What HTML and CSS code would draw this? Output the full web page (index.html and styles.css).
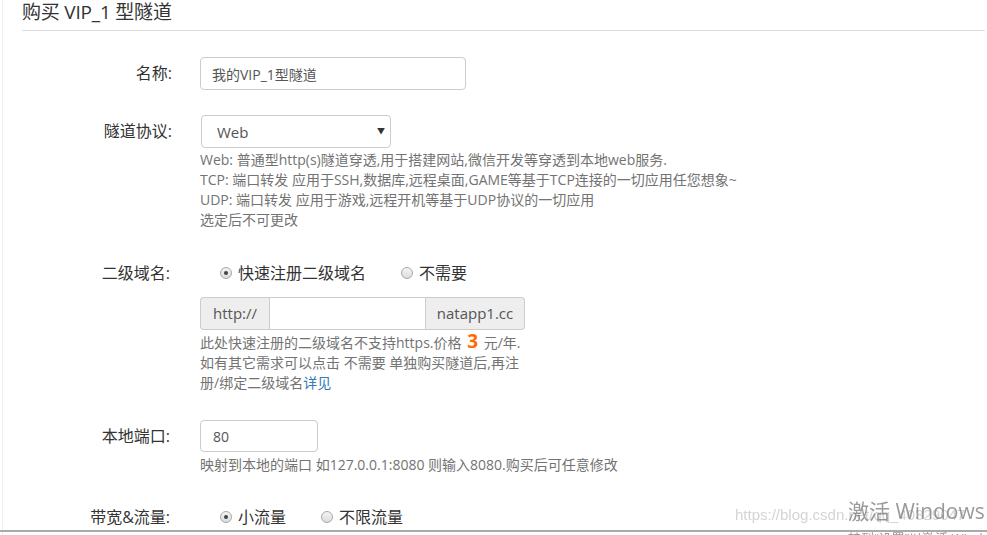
FILE: index.html
```html
<!DOCTYPE html>
<html>

<head>
    <meta charset="UTF-8" />
    <meta name="viewport" content="width=device-width, initial-scale=1.0" />
    <title>购买隧道</title>
    <link rel="stylesheet" href="styles.css">
</head>

<body>

<div class="page">
    <h3 class="title">购买 VIP_1 型隧道</h3>

    <form class="form">
        <div class="row row-name">
            <label class="label">名称:</label>
            <div class="ctl">
                <input type="text" class="input w-name" value="我的VIP_1型隧道">
            </div>
        </div>

        <div class="row row-proto">
            <label class="label">隧道协议:</label>
            <div class="ctl">
                <div class="select-wrap">
                    <select class="select">
                        <option>Web</option>
                        <option>TCP</option>
                        <option>UDP</option>
                    </select>
                    <span class="caret">▼</span>
                </div>
                <div class="help">
                    Web: 普通型http(s)隧道穿透,用于搭建网站,微信开发等穿透到本地web服务.<br>
                    TCP: 端口转发 应用于SSH,数据库,远程桌面,GAME等基于TCP连接的一切应用任您想象~<br>
                    UDP: 端口转发 应用于游戏,远程开机等基于UDP协议的一切应用<br>
                    选定后不可更改
                </div>
            </div>
        </div>

        <div class="row row-domain">
            <label class="label label-radio">二级域名:</label>
            <div class="ctl">
                <div class="radios">
                    <label class="opt"><span class="dot checked"></span>快速注册二级域名</label>
                    <label class="opt"><span class="dot"></span>不需要</label>
                </div>
                <div class="group">
                    <span class="addon addon-l">http://</span>
                    <input type="text" class="input group-input">
                    <span class="addon addon-r">natapp1.cc</span>
                </div>
                <div class="help help-domain">
                    此处快速注册的二级域名不支持https.价格 <span class="price">3</span> 元/年.
                    如有其它需求可以点击 不需要 单独购买隧道后,再注册/绑定二级域名<a href="#" class="link">详见</a>
                </div>
            </div>
        </div>

        <div class="row row-port">
            <label class="label label-port">本地端口:</label>
            <div class="ctl">
                <input type="text" class="input w-port" value="80">
                <div class="help">映射到本地的端口 如127.0.0.1:8080 则输入8080.购买后可任意修改</div>
            </div>
        </div>

        <div class="row row-bw">
            <label class="label label-radio">带宽&amp;流量:</label>
            <div class="ctl">
                <div class="radios">
                    <label class="opt"><span class="dot checked"></span>小流量</label>
                    <label class="opt"><span class="dot"></span>不限流量</label>
                </div>
            </div>
        </div>
    </form>
</div>

<span class="wm-url">https://blog.csdn.net/qq_40329047</span>
<div class="wm-win">
    <div class="wm-big">激活 Windows</div>
    <div class="wm-small">转到“设置”以激活 Windows。</div>
</div>

<div class="frame-bottom"></div>

</body>

</html>
```

FILE: styles.css
```css
body {
    margin: 0;
    font-family: "Open Sans", "Noto Sans CJK SC", sans-serif;
    color: #333;
    background: #fff;
    overflow: hidden;
}

.page {
    margin-left: 2px;
    border-left: 1px solid #f0f0f0;
    padding-left: 19px;
    padding-right: 2px;
    min-height: 535px;
}

.title {
    margin: 0;
    font-size: 19px;
    font-weight: normal;
    line-height: 24px;
    padding-bottom: 6px;
    border-bottom: 1px solid #ddd;
    color: #333;
    letter-spacing: -0.2px;
}

.form {
    padding-top: 26px;
}

.row {
    display: flex;
    align-items: flex-start;
}

.label {
    width: 150px;
    flex: none;
    text-align: right;
    font-size: 16px;
    line-height: 33px;
}

.label-radio {
    line-height: 20px;
    width: 148px;
}

.label-port {
    line-height: 32px;
    width: 148px;
}

.ctl {
    margin-left: 28px;
}

.label-radio + .ctl,
.label-port + .ctl {
    margin-left: 30px;
}

.row-name {
    margin-bottom: 25px;
}

.row-proto {
    margin-bottom: 33px;
}

.row-domain {
    margin-bottom: 27px;
}

.row-port {
    margin-bottom: 32px;
}

.input {
    display: block;
    box-sizing: border-box;
    height: 33px;
    border: 1px solid #ccc;
    border-radius: 4px;
    padding: 0 11px;
    font-family: inherit;
    font-size: 14px;
    color: #555;
    outline: none;
}

.w-name {
    width: 266px;
}

.w-port {
    width: 118px;
    height: 32px;
    padding-left: 12px;
}

.select-wrap {
    position: relative;
    width: 190px;
    margin-left: 1px;
}

.select {
    -webkit-appearance: none;
    appearance: none;
    box-sizing: border-box;
    width: 190px;
    height: 33px;
    border: 1px solid #ccc;
    border-radius: 4px;
    background: #fff;
    padding: 0 15px;
    font-family: inherit;
    font-size: 15px;
    color: #555;
    outline: none;
}

.caret {
    position: absolute;
    right: 6px;
    top: 10px;
    font-size: 8px;
    color: #333;
    pointer-events: none;
}

.help {
    margin-top: 2px;
    font-size: 14px;
    line-height: 20px;
    color: #737373;
}

.help-domain {
    width: 325px;
    margin-top: 3px;
}

.row-port .help {
    margin-top: 3px;
}

.price {
    color: #ff6a00;
    font-weight: bold;
    font-size: 19px;
    line-height: 14px;
    margin: 0 2px;
}

.link {
    color: #337ab7;
    text-decoration: none;
}

.radios {
    display: flex;
    gap: 35px;
    padding-left: 20px;
    height: 20px;
    align-items: center;
}

.opt {
    display: flex;
    align-items: center;
    font-size: 16px;
    line-height: 20px;
    color: #333;
}

.dot {
    box-sizing: border-box;
    width: 12px;
    height: 12px;
    border-radius: 50%;
    border: 1px solid #a8a8a8;
    background: linear-gradient(#f4f4f4, #dcdcdc);
    margin-right: 6px;
    position: relative;
}

.dot.checked::after {
    content: "";
    position: absolute;
    left: 3px;
    top: 3px;
    width: 4px;
    height: 4px;
    border-radius: 50%;
    background: #444;
}

.group {
    display: flex;
    width: 325px;
    margin-top: 14px;
}

.addon {
    box-sizing: border-box;
    height: 33px;
    line-height: 31px;
    border: 1px solid #ccc;
    background: #eee;
    color: #555;
    font-size: 15px;
    text-align: center;
}

.addon-l {
    width: 69px;
    border-radius: 4px 0 0 4px;
    border-right: none;
}

.addon-r {
    width: 99px;
    border-radius: 0 4px 4px 0;
    border-left: none;
}

.group-input {
    width: 157px;
    border-radius: 0;
}

/* windows watermark over the page */
.wm-url {
    position: fixed;
    left: 735px;
    top: 506px;
    font-family: "Liberation Sans", sans-serif;
    font-size: 15px;
    color: #d4d4d4;
    pointer-events: none;
}

.wm-win {
    position: fixed;
    left: 848px;
    top: 498px;
    white-space: nowrap;
    color: rgba(120, 120, 120, 0.75);
    pointer-events: none;
}

.wm-big {
    font-size: 21px;
    line-height: 26px;
}

.wm-small {
    font-size: 13px;
    line-height: 16px;
    margin-top: 6px;
}

.frame-bottom {
    position: fixed;
    left: 0;
    right: 0;
    bottom: 3px;
    height: 2px;
    background: #aaa;
}
```
